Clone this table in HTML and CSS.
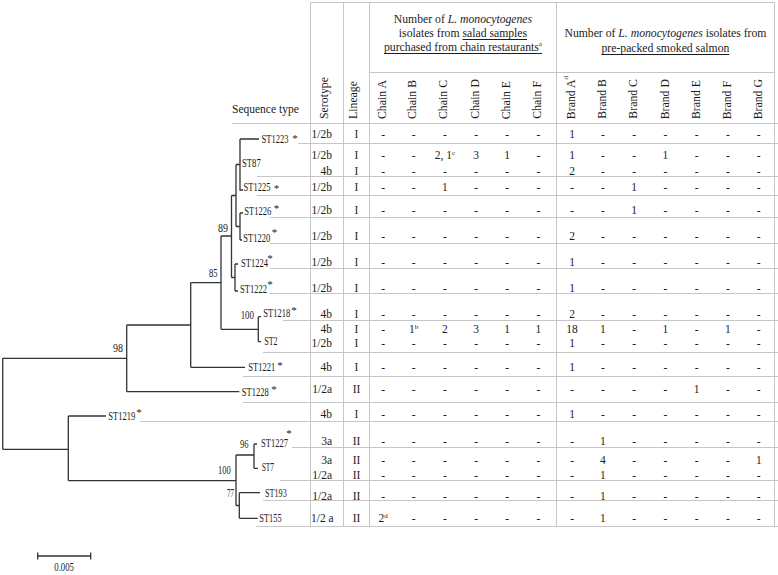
FILE: index.html
```html
<!DOCTYPE html>
<html>
<head>
<meta charset="utf-8">
<link rel="stylesheet" href="styles.css">
</head>
<body>
<div class="fig">
  <div class="grid head">
    <div class="seq">Sequence type</div>
    <div class="hv hs"><span class="vt">Serotype</span></div>
    <div class="hv hl"><span class="vt">Lineage</span></div>
    <div class="g g1"><span class="gt">Number of <i>L. monocytogenes</i><br>isolates from <u>salad samples</u><br><u>purchased from chain restaurants<sup>a</sup></u></span></div>
    <div class="g g2"><span class="gt">Number of <i>L. monocytogenes</i> isolates from<br><u>pre-packed smoked salmon</u></span></div>
    <div class="hv hc c1"><span class="vt">Chain A</span></div>
    <div class="hv hc"><span class="vt">Chain B</span></div>
    <div class="hv hc"><span class="vt">Chain C</span></div>
    <div class="hv hc"><span class="vt">Chain D</span></div>
    <div class="hv hc"><span class="vt">Chain E</span></div>
    <div class="hv hc"><span class="vt">Chain F</span></div>
    <div class="hv b1"><span class="vt">Brand A<sup>d</sup></span></div>
    <div class="hv"><span class="vt">Brand B</span></div>
    <div class="hv"><span class="vt">Brand C</span></div>
    <div class="hv"><span class="vt">Brand D</span></div>
    <div class="hv"><span class="vt">Brand E</span></div>
    <div class="hv"><span class="vt">Brand F</span></div>
    <div class="hv b7"><span class="vt">Brand G</span></div>
  </div>

  <div class="grid row r1"><div></div><div class="sero">1/2b</div><div class="lin">I</div><div class="ch c1">-</div><div class="ch">-</div><div class="ch">-</div><div class="ch">-</div><div class="ch">-</div><div class="ch">-</div><div class="b1">1</div><div>-</div><div>-</div><div>-</div><div>-</div><div>-</div><div class="b7">-</div></div>

  <div class="grid row r2"><div></div><div class="sero">1/2b<br>4b</div><div class="lin">I<br>I</div><div class="ch c1">-<br>-</div><div class="ch">-<br>-</div><div class="ch">2, 1<sup>c</sup><br>-</div><div class="ch">3<br>-</div><div class="ch">1<br>-</div><div class="ch">-<br>-</div><div class="b1">1<br>2</div><div>-<br>-</div><div>-<br>-</div><div>1<br>-</div><div>-<br>-</div><div>-<br>-</div><div class="b7">-<br>-</div></div>

  <div class="grid row r3"><div></div><div class="sero">1/2b</div><div class="lin">I</div><div class="ch c1">-</div><div class="ch">-</div><div class="ch">1</div><div class="ch">-</div><div class="ch">-</div><div class="ch">-</div><div class="b1">-</div><div>-</div><div>1</div><div>-</div><div>-</div><div>-</div><div class="b7">-</div></div>

  <div class="grid row r4"><div></div><div class="sero">1/2b</div><div class="lin">I</div><div class="ch c1">-</div><div class="ch">-</div><div class="ch">-</div><div class="ch">-</div><div class="ch">-</div><div class="ch">-</div><div class="b1">-</div><div>-</div><div>1</div><div>-</div><div>-</div><div>-</div><div class="b7">-</div></div>

  <div class="grid row r5"><div></div><div class="sero">1/2b</div><div class="lin">I</div><div class="ch c1">-</div><div class="ch">-</div><div class="ch">-</div><div class="ch">-</div><div class="ch">-</div><div class="ch">-</div><div class="b1">2</div><div>-</div><div>-</div><div>-</div><div>-</div><div>-</div><div class="b7">-</div></div>

  <div class="grid row r6"><div></div><div class="sero">1/2b</div><div class="lin">I</div><div class="ch c1">-</div><div class="ch">-</div><div class="ch">-</div><div class="ch">-</div><div class="ch">-</div><div class="ch">-</div><div class="b1">1</div><div>-</div><div>-</div><div>-</div><div>-</div><div>-</div><div class="b7">-</div></div>

  <div class="grid row r7"><div></div><div class="sero">1/2b</div><div class="lin">I</div><div class="ch c1">-</div><div class="ch">-</div><div class="ch">-</div><div class="ch">-</div><div class="ch">-</div><div class="ch">-</div><div class="b1">1</div><div>-</div><div>-</div><div>-</div><div>-</div><div>-</div><div class="b7">-</div></div>

  <div class="grid row r8"><div></div><div class="sero">4b</div><div class="lin">I</div><div class="ch c1">-</div><div class="ch">-</div><div class="ch">-</div><div class="ch">-</div><div class="ch">-</div><div class="ch">-</div><div class="b1">2</div><div>-</div><div>-</div><div>-</div><div>-</div><div>-</div><div class="b7">-</div></div>

  <div class="grid row r9"><div></div><div class="sero">4b<br>1/2b</div><div class="lin">I<br>I</div><div class="ch c1">-<br>-</div><div class="ch">1<sup>b</sup><br>-</div><div class="ch">2<br>-</div><div class="ch">3<br>-</div><div class="ch">1<br>-</div><div class="ch">1<br>-</div><div class="b1">18<br>1</div><div>1<br>-</div><div>-<br>-</div><div>1<br>-</div><div>-<br>-</div><div>1<br>-</div><div class="b7">-<br>-</div></div>

  <div class="grid row r10"><div></div><div class="sero">4b</div><div class="lin">I</div><div class="ch c1">-</div><div class="ch">-</div><div class="ch">-</div><div class="ch">-</div><div class="ch">-</div><div class="ch">-</div><div class="b1">1</div><div>-</div><div>-</div><div>-</div><div>-</div><div>-</div><div class="b7">-</div></div>

  <div class="grid row r11"><div></div><div class="sero">1/2a</div><div class="lin">II</div><div class="ch c1">-</div><div class="ch">-</div><div class="ch">-</div><div class="ch">-</div><div class="ch">-</div><div class="ch">-</div><div class="b1">-</div><div>-</div><div>-</div><div>-</div><div>1</div><div>-</div><div class="b7">-</div></div>

  <div class="grid row r12"><div></div><div class="sero">4b</div><div class="lin">I</div><div class="ch c1">-</div><div class="ch">-</div><div class="ch">-</div><div class="ch">-</div><div class="ch">-</div><div class="ch">-</div><div class="b1">1</div><div>-</div><div>-</div><div>-</div><div>-</div><div>-</div><div class="b7">-</div></div>

  <div class="grid row r13"><div></div><div class="sero">3a</div><div class="lin">II</div><div class="ch c1">-</div><div class="ch">-</div><div class="ch">-</div><div class="ch">-</div><div class="ch">-</div><div class="ch">-</div><div class="b1">-</div><div>1</div><div>-</div><div>-</div><div>-</div><div>-</div><div class="b7">-</div></div>

  <div class="grid row r14"><div></div><div class="sero">3a<br>1/2a</div><div class="lin">II<br>II</div><div class="ch c1">-<br>-</div><div class="ch">-<br>-</div><div class="ch">-<br>-</div><div class="ch">-<br>-</div><div class="ch">-<br>-</div><div class="ch">-<br>-</div><div class="b1">-<br>-</div><div>4<br>1</div><div>-<br>-</div><div>-<br>-</div><div>-<br>-</div><div>-<br>-</div><div class="b7">1<br>-</div></div>

  <div class="grid row r15"><div></div><div class="sero">1/2a</div><div class="lin">II</div><div class="ch c1">-</div><div class="ch">-</div><div class="ch">-</div><div class="ch">-</div><div class="ch">-</div><div class="ch">-</div><div class="b1">-</div><div>1</div><div>-</div><div>-</div><div>-</div><div>-</div><div class="b7">-</div></div>

  <div class="grid row r16"><div></div><div class="sero">1/2 a</div><div class="lin">II</div><div class="ch c1">2<sup>d</sup></div><div class="ch">-</div><div class="ch">-</div><div class="ch">-</div><div class="ch">-</div><div class="ch">-</div><div class="b1">-</div><div>1</div><div>-</div><div>-</div><div>-</div><div>-</div><div class="b7">-</div></div>

  <svg class="tree" width="310" height="575" viewBox="0 0 310 575">
    <path class="ln" d="M240 139H259 M240 139V190H243 M236 164.5V226.5 M236 164.5H240 M236 226.5H240 M240 213V240 M240 213H243 M240 240H242 M235 264V291 M235 264H238 M235 291H238 M231.5 195.5V277.5 M231.5 195.5H236 M231.5 277.5H235 M221 236V329.3 M221 236H231.5 M221 329.3H258.3 M258.3 316.7V341.7 M258.3 316.7H261 M258.3 341.7H261 M190.7 282.6V367.3 M190.7 282.6H221 M190.7 367.3H245 M126.7 325V391.7 M126.7 325H190.7 M126.7 391.7H239.3 M2.7 358.3V449.3 M2.7 358.3H126.7 M2.7 449.3H68.3 M68.3 416V480.7 M68.3 416H106 M68.3 480.7H236 M236 455V505.5 M236 455H254 M236 505.5H239.3 M254 444V468.3 M254 444H257 M254 468.3H258 M239.3 492.7V518.3 M239.3 492.7H260 M239.3 518.3H257.7 M37.7 556H90.7 M37.7 552.5V559.5 M90.7 552.5V559.5"/>
    <g class="lbl">
      <text x="261.5" y="143" textLength="27" lengthAdjust="spacingAndGlyphs">ST1223</text>
      <text x="242" y="167" textLength="18.7" lengthAdjust="spacingAndGlyphs">ST87</text>
      <text x="243.5" y="191" textLength="27" lengthAdjust="spacingAndGlyphs">ST1225</text>
      <text x="244.3" y="214.8" textLength="27" lengthAdjust="spacingAndGlyphs">ST1226</text>
      <text x="243.3" y="242" textLength="27" lengthAdjust="spacingAndGlyphs">ST1220</text>
      <text x="241" y="267" textLength="27" lengthAdjust="spacingAndGlyphs">ST1224</text>
      <text x="240" y="293" textLength="27" lengthAdjust="spacingAndGlyphs">ST1222</text>
      <text x="263.3" y="317" textLength="27" lengthAdjust="spacingAndGlyphs">ST1218</text>
      <text x="264.3" y="344.8" textLength="13.3" lengthAdjust="spacingAndGlyphs">ST2</text>
      <text x="248.3" y="371" textLength="27" lengthAdjust="spacingAndGlyphs">ST1221</text>
      <text x="241.7" y="395.5" textLength="27" lengthAdjust="spacingAndGlyphs">ST1228</text>
      <text x="108.3" y="419.8" textLength="27" lengthAdjust="spacingAndGlyphs">ST1219</text>
      <text x="261" y="446.5" textLength="27" lengthAdjust="spacingAndGlyphs">ST1227</text>
      <text x="261.7" y="470.5" textLength="12.3" lengthAdjust="spacingAndGlyphs">ST7</text>
      <text x="265" y="496.5" textLength="21.7" lengthAdjust="spacingAndGlyphs">ST193</text>
      <text x="259.3" y="522" textLength="22.3" lengthAdjust="spacingAndGlyphs">ST155</text>
    </g>
    <g class="ast">
      <text x="295" y="141.5">*</text>
      <text x="276.5" y="191.5">*</text>
      <text x="276.5" y="212">*</text>
      <text x="274.5" y="235.5">*</text>
      <text x="270" y="262">*</text>
      <text x="270" y="288">*</text>
      <text x="294" y="314">*</text>
      <text x="280" y="368.8">*</text>
      <text x="274" y="392.8">*</text>
      <text x="139" y="416">*</text>
      <text x="289" y="437">*</text>
    </g>
    <g class="lbl">
      <text x="218" y="231.5" textLength="10" lengthAdjust="spacingAndGlyphs">89</text>
      <text x="209" y="277" textLength="8.5" lengthAdjust="spacingAndGlyphs">85</text>
      <text x="240.7" y="318.8" textLength="13.3" lengthAdjust="spacingAndGlyphs">100</text>
      <text x="113" y="352" textLength="10" lengthAdjust="spacingAndGlyphs">98</text>
      <text x="240" y="447.8" textLength="8.5" lengthAdjust="spacingAndGlyphs">96</text>
      <text x="218" y="473.8" textLength="12.7" lengthAdjust="spacingAndGlyphs">100</text>
      <text x="227" y="497" textLength="7" lengthAdjust="spacingAndGlyphs">77</text>
      <text x="54.3" y="571.3" textLength="19.7" lengthAdjust="spacingAndGlyphs">0.005</text>
    </g>
  </svg>
</div>
</body>
</html>
```

FILE: styles.css
```css
html, body {
  margin: 0;
  padding: 0;
  background: #fff;
}

.fig {
  position: relative;
  width: 778px;
  height: 575px;
  padding-top: 2px;
  box-sizing: border-box;
  font-family: "Liberation Serif", "Times New Roman", serif;
  color: #1c1c1c;
  overflow: hidden;
}

.grid {
  display: grid;
  grid-template-columns: calc(310px - var(--s)) 33px 26px repeat(6, 31.1667px) repeat(7, 31.2857px);
  margin-left: var(--s);
  box-sizing: border-box;
}

.grid > div {
  box-sizing: border-box;
}

/* ---------- header ---------- */
.head {
  --s: 232px;
  height: 122px;
  grid-template-rows: 71px 1fr;
  border-bottom: 1px solid #c6c6c6;
}

.seq {
  grid-row: 1 / 3;
  align-self: end;
  text-align: right;
  white-space: nowrap;
  font-size: 11.5px;
  line-height: 14px;
  padding-right: 20px;
  padding-bottom: 7px;
}

.hv {
  display: flex;
  justify-content: center;
  align-items: flex-end;
  padding-bottom: 4px;
}

.hs, .hl {
  grid-row: 1 / 3;
  border-left: 1px solid #c6c6c6;
  border-top: 1px solid #c6c6c6;
  padding-right: 5px;
}

.hc {
  padding-right: 5px;
}

.vt {
  writing-mode: vertical-rl;
  transform: rotate(180deg);
  font-size: 11.8px;
  line-height: 1;
  white-space: nowrap;
}

.vt sup {
  font-size: 7px;
  line-height: 0;
}

.g {
  font-size: 11.7px;
  line-height: 14px;
  display: flex;
  align-items: center;
  justify-content: center;
  border-top: 1px solid #c6c6c6;
  border-left: 1px solid #c6c6c6;
  border-bottom: 1px solid #c6c6c6;
}

.gt {
  display: block;
  text-align: center;
  white-space: nowrap;
}

.g1 {
  grid-column: 4 / span 6;
  padding-bottom: 7px;
}

.g2 {
  grid-column: 10 / span 7;
  border-right: 1px solid #c6c6c6;
  line-height: 15.5px;
  padding-top: 7px;
}

.g u {
  text-decoration-thickness: 1px;
  text-underline-offset: 2px;
}

.g sup {
  font-size: 7px;
  line-height: 0;
}

/* ---------- body rows ---------- */
.row {
  border-bottom: 1px solid #c6c6c6;
  font-size: 11.5px;
}

.row > div {
  text-align: center;
  padding-top: var(--p);
  line-height: var(--lh, 13px);
  white-space: nowrap;
}

.row sup {
  font-size: 7px;
  line-height: 0;
  vertical-align: 4px;
}

.row > .sero {
  border-left: 1px solid #c6c6c6;
  text-align: right;
  padding-right: 11px;
}

.lin {
  border-left: 1px solid #c6c6c6;
}

.c1, .b1 {
  border-left: 1px solid #c6c6c6;
}

.b7 {
  border-right: 1px solid #c6c6c6;
}

.ch {
  padding-right: 4px;
}

.r1  { --s: 298px; height: 20px; --p: 3.5px; }
.r2  { --s: 257px; height: 33px; --p: 2.7px; --lh: 16.5px; }
.r3  { --s: 257px; height: 19px; --p: 3.5px; }
.r4  { --s: 270px; height: 22px; --p: 8.2px; }
.r5  { --s: 270px; height: 26px; --p: 12px; }
.r6  { --s: 270px; height: 25px; --p: 12.3px; }
.r7  { --s: 270px; height: 25px; --p: 13px; }
.r8  { --s: 283px; height: 27px; --p: 13.5px; }
.r9  { --s: 263px; height: 32px; --p: 2.4px; --lh: 13.3px; }
.r10 { --s: 243px; height: 24px; --p: 7.8px; }
.r11 { --s: 243px; height: 26px; --p: 5.8px; }
.r12 { --s: 140px; height: 19px; --p: 4.8px; }
.r13 { --s: 292px; height: 26px; --p: 13px; }
.r14 { --s: 280px; height: 33px; --p: 4.5px; --lh: 15px; }
.r15 { --s: 263px; height: 20px; --p: 8.5px; }
.r16 { --s: 256px; height: 26px; --p: 10.5px; }

/* ---------- tree ---------- */
.tree {
  position: absolute;
  left: 0;
  top: 0;
  pointer-events: none;
}

.tree .ln {
  fill: none;
  stroke: #333;
  stroke-width: 1.3;
}

.tree .lbl text {
  font-family: "Liberation Serif", "Times New Roman", serif;
  font-size: 11.5px;
  fill: #1c1c1c;
}

.tree .ast text {
  font-family: "Liberation Serif", "Times New Roman", serif;
  font-size: 11px;
  fill: #1c1c1c;
  text-anchor: middle;
}
```
